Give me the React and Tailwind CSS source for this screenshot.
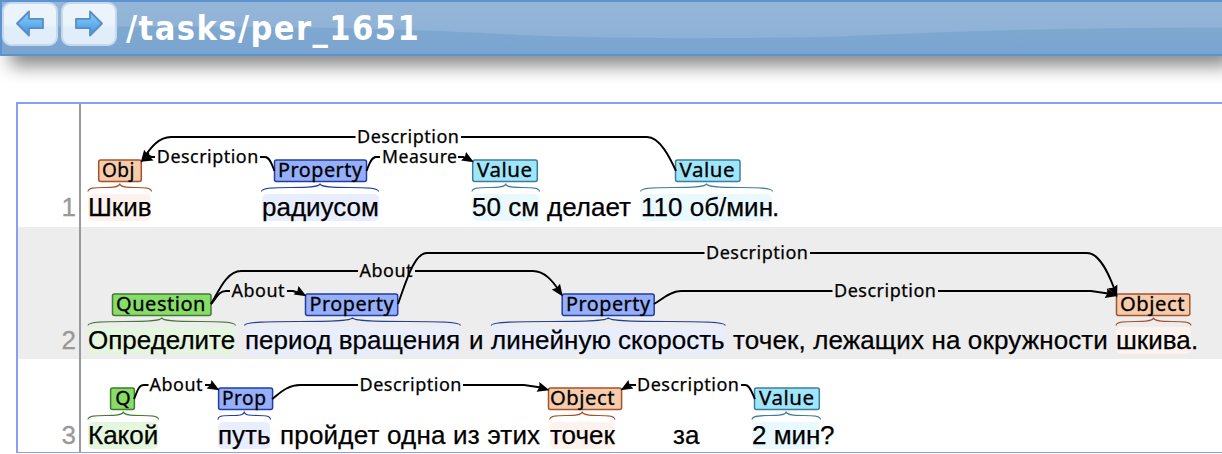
import React from "react";

const PALETTE = {
  object: { fill: "#f7ccad", stroke: "#a55228" },
  property: { fill: "#95affb", stroke: "#203d9f" },
  value: { fill: "#a0e6fa", stroke: "#3d7d9a" },
  question: { fill: "#87dd68", stroke: "#417a30" },
};

// Tag boxes: kind, label, box left/right/top, label left/width
const TAGS = [
  ["object", "Obj", 98.7, 141.3, 160, 102, 33],
  ["property", "Property", 274.5, 366.5, 160, 278, 84.5],
  ["value", "Value", 472.7, 537.3, 160, 477, 55.5],
  ["value", "Value", 675.5, 740, 160, 679.5, 55.5],
  ["question", "Question", 112.5, 211, 294, 116, 90],
  ["property", "Property", 305.5, 397.7, 294, 309.5, 84.5],
  ["property", "Property", 562.2, 654.2, 294, 566, 84.5],
  ["object", "Object", 1116.5, 1189.8, 294, 1120, 65],
  ["question", "Q", 110.6, 134.4, 388, 115.3, 16],
  ["property", "Prop", 218.6, 272.6, 388, 222, 44.5],
  ["object", "Object", 548.5, 621.6, 388, 550, 65],
  ["value", "Value", 754.5, 819.3, 388, 759, 55.5],
];

// Braces: kind, left, right, bottom
const BRACES = [
  ["object", 88, 151.5, 191.5],
  ["property", 261.5, 378.5, 191.5],
  ["value", 472, 539.5, 191.5],
  ["value", 640.5, 772.5, 191.5],
  ["question", 88, 235.5, 325.5],
  ["property", 244.5, 460.5, 325.5],
  ["property", 491.3, 725.3, 325.5],
  ["object", 1116, 1191, 325.5],
  ["question", 88, 158.5, 419.5],
  ["property", 218, 270.5, 419.5],
  ["object", 549.8, 614.8, 419.5],
  ["value", 752, 820.5, 419.5],
];

const ARCS = [
  "M355.5 137H171C158 137 150 149 145 156",
  "M461 137H647C660 137 670 158 676 171",
  "M155 157H150L146 158",
  "M260 157H265C270 157 272 165 274.5 171",
  "M366.5 171C369 165 371 157 376 157H380",
  "M458 157H463L466 158",
  "M398 304C406 282 414 253 427 253H704.5",
  "M810 253H1087C1100 253 1109 275 1114 288",
  "M211 304C218 293 226 271 241 271H358",
  "M415 271H533C545 271 553 282 558 289",
  "M211 304C216 299 218 291 226 291H230",
  "M287 291H293L299 293",
  "M654 304C661 300 670 291 681 291H832.5",
  "M938 291H1091L1108 293.5",
  "M134 399C137 393 138 385 144 385H148.5",
  "M205 385H210L213 386",
  "M272 399C279 394 287 385 300 385H358",
  "M463 385H524L541 387.5",
  "M636 385H630L627 386",
  "M741 385H745C750 385 752 393 755 399",
];

// Arrow heads: tip x, tip y, direction in degrees
const HEADS = [
  [141, 162, 128],
  [141, 161.5, 152],
  [473.5, 162, 30],
  [562.5, 296, 55],
  [306, 296, 30],
  [1117, 297, 68],
  [1117, 296, 14],
  [219, 390, 30],
  [549, 390, 16],
  [621, 390, 150],
];

const ARC_LABELS = [
  ["Description", 357, 142.8, 102.5],
  ["Description", 156.8, 162.8, 102],
  ["Measure", 382, 162.8, 75.5],
  ["Description", 706, 258.8, 102.5],
  ["About", 359.5, 276.8, 53.5],
  ["About", 231.5, 296.8, 53.5],
  ["Description", 834, 296.8, 102.5],
  ["About", 149.5, 390.8, 53.5],
  ["Description", 359.5, 390.8, 102.5],
  ["Description", 637, 390.8, 102.5],
];

function bracePath(x0, x1, b) {
  const c = (x0 + x1) / 2;
  const t = b - 8;
  return `M${x0} ${b}C${x0} ${t} ${c} ${b} ${c} ${t}C${c} ${b} ${x1} ${t} ${x1} ${b}`;
}

function Annotations() {
  return (
    <svg
      className="pointer-events-none absolute top-0 left-0 h-[348px] w-[1204px] [font-family:'Noto_Sans','Open_Sans',sans-serif]"
      viewBox="18 104 1204 348"
    >
      {BRACES.map(([kind, x0, x1, b], i) => (
        <path key={i} d={bracePath(x0, x1, b)} fill="none" stroke={PALETTE[kind].stroke} strokeWidth="1.2" />
      ))}
      {TAGS.map(([kind, label, x0, x1, y, tx, tw], i) => (
        <g key={i}>
          <rect
            x={x0}
            y={y}
            width={x1 - x0}
            height="21.5"
            rx="2"
            fill={PALETTE[kind].fill}
            stroke={PALETTE[kind].stroke}
            strokeWidth="1.5"
          />
          <text
            x={tx}
            y={y + 17}
            fontSize="19"
            letterSpacing="0.5"
            stroke="#000"
            strokeWidth="0.3"
            textLength={tw}
            lengthAdjust="spacingAndGlyphs"
          >
            {label}
          </text>
        </g>
      ))}
      {ARCS.map((d, i) => (
        <path key={i} d={d} fill="none" stroke="#000" strokeWidth="1.9" />
      ))}
      {HEADS.map(([x, y, a], i) => (
        <path key={i} d="M0.5 0L-11.5 -5L-10 0L-11.5 5Z" transform={`translate(${x} ${y}) rotate(${a})`} />
      ))}
      {ARC_LABELS.map(([label, x, y, w], i) => (
        <text
          key={i}
          x={x}
          y={y}
          fontSize="17.5"
          letterSpacing="0.5"
          stroke="#000"
          strokeWidth="0.25"
          textLength={w}
          lengthAdjust="spacingAndGlyphs"
        >
          {label}
        </text>
      ))}
    </svg>
  );
}

function Token({ className = "", children }) {
  return <span className={`h-[27px] shrink-0 rounded-[5px] leading-[27px] ${className}`}>{children}</span>;
}

function Row({ number, className, children }) {
  return (
    <div className={`flex text-[26px] whitespace-nowrap ${className}`}>
      <div className="flex w-[63px] shrink-0 items-end justify-end border-r-2 border-[#999] pr-[3px] text-[#999] [-webkit-text-stroke:0.3px_#999]">
        <span className="h-[27px] leading-[27px]">{number}</span>
      </div>
      <div className="flex items-end pl-[7px] text-black [-webkit-text-stroke:0.25px_#000]">{children}</div>
    </div>
  );
}

function NavButton({ flip, label }) {
  return (
    <button
      aria-label={label}
      className="flex h-[44px] w-[56px] items-center justify-center rounded-[9px] border-2 border-[#c5d9eb] bg-linear-to-b from-[#ebf3fb] from-50% to-[#e1edf9] to-60%"
    >
      <svg className={flip ? "h-[28px] w-[30px] -scale-x-100" : "h-[28px] w-[30px]"} viewBox="0 0 30 28">
        <defs>
          <linearGradient id={flip ? "arrow-next" : "arrow-prev"} x1="0" y1="0" x2="0" y2="1">
            <stop offset="0" stopColor="#8cc4ee" />
            <stop offset="0.45" stopColor="#68b8f0" />
            <stop offset="1" stopColor="#3f8ddb" />
          </linearGradient>
        </defs>
        <path
          d="M2 13.5L14 1.5V8.8H28V18.2H14V25.5Z"
          fill={flip ? "url(#arrow-next)" : "url(#arrow-prev)"}
          stroke="#5b8cc9"
          strokeWidth="1.8"
          strokeLinejoin="round"
        />
      </svg>
    </button>
  );
}

function Header() {
  return (
    <header className="relative h-[56px] border-2 border-r-0 border-[#5b93d3] bg-linear-to-b from-[#84abd3] to-[#7aa5ce] shadow-[10px_10px_18px_#888]">
      <svg className="absolute top-0 left-0 h-[52px] w-[1220px]" viewBox="2 2 1220 52">
        <defs>
          <linearGradient id="gloss" x1="0" y1="0" x2="0" y2="1">
            <stop offset="0" stopColor="#95b6d8" />
            <stop offset="1" stopColor="#8db1d6" />
          </linearGradient>
        </defs>
        <path d="M2 2H1222V27.5C1050 28 960 31 850 36C720 40 600 38 520 35C430 30 330 26.5 180 26.5H2Z" fill="url(#gloss)" />
      </svg>
      <div className="relative flex gap-[3px]">
        <NavButton label="Previous" />
        <NavButton label="Next" flip />
        <h1 className="ml-[6px] pt-[5px] text-[34px] leading-[42px] font-bold tracking-[1.45px] text-white [font-family:'DejaVu_Sans_Condensed','DejaVu_Sans',sans-serif] [font-stretch:condensed]">
          /tasks/per_1651
        </h1>
      </div>
    </header>
  );
}

export default function App() {
  return (
    <div className="h-[454px] overflow-hidden bg-white [font-family:'Liberation_Sans',Arial,sans-serif]">
      <Header />
      <main className="relative mt-[46px] ml-[16px] border-t-2 border-b border-l-2 border-[#87a0f4]">
        <Row number="1" className="h-[123px] bg-white [&>div]:pb-[6px]">
          <Token className="w-[63px] bg-[#fdf2ed]">Шкив</Token>
          <Token className="ml-[111px] w-[117px] bg-[#e9eeff]">радиусом</Token>
          <Token className="ml-[93px] w-[67px] bg-[#eaf8ff]">50 см</Token>
          <Token className="ml-[8px] w-[83px]">делает</Token>
          <Token className="ml-[11px] w-[131px] bg-[#eaf8ff]">110 об/мин</Token>
          <Token>.</Token>
        </Row>
        <Row number="2" className="h-[132px] bg-[#ededed] [&>div]:pb-[5px]">
          <Token className="w-[147px] bg-[#e4f6dd]">Определите</Token>
          <Token className="ml-[10px] w-[215px] bg-[#e9eeff]">период вращения</Token>
          <Token className="ml-[9px] w-[13px]">и</Token>
          <Token className="ml-[9px] w-[234px] bg-[#e9eeff]">линейную скорость</Token>
          <Token className="ml-[8px] w-[374px] tracking-[0.12px]">точек, лежащих на окружности</Token>
          <Token className="ml-[9px] w-[75px] bg-[#fdf2ed]">шкива</Token>
          <Token>.</Token>
        </Row>
        <Row number="3" className="h-[93px] bg-white [&>div]:pb-[3px]">
          <Token className="w-[70px] bg-[#e4f6dd]">Какой</Token>
          <Token className="ml-[60px] w-[52px] bg-[#e9eeff]">путь</Token>
          <Token className="ml-[10px] w-[260px] tracking-[0.2px]">пройдет одна из этих</Token>
          <Token className="ml-[10px] w-[65px] bg-[#fdf2ed]">точек</Token>
          <Token className="ml-[58px] w-[27px]">за</Token>
          <Token className="ml-[52px] w-[68px] bg-[#eaf8ff]">2 мин</Token>
          <Token>?</Token>
        </Row>
        <Annotations />
      </main>
    </div>
  );
}
